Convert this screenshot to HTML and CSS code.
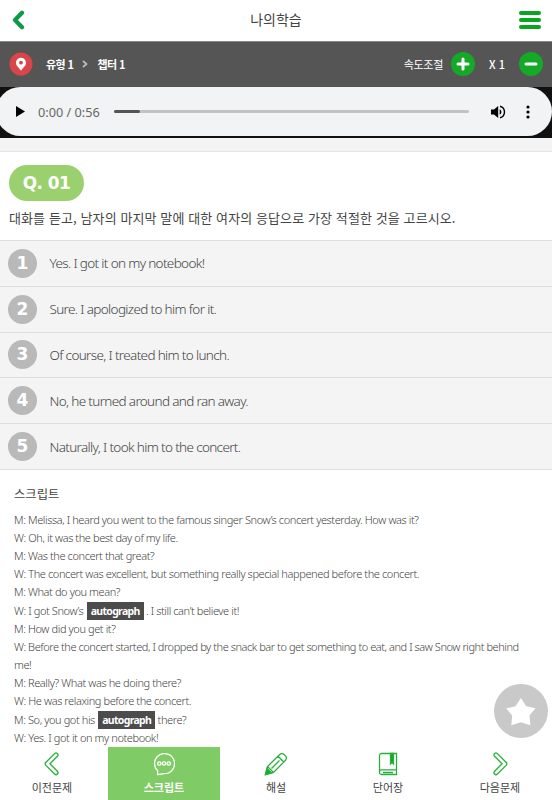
FILE: index.html
```html
<!DOCTYPE html>
<html lang="ko">
<head>
    <meta charset="UTF-8">
    <meta name="viewport" content="width=device-width, initial-scale=1.0">
    <title>나의학습</title>
    <link rel="stylesheet" href="styles.css">
</head>
<body>

    <header class="top">
        <a href="#" class="back" aria-label="이전">
            <svg width="14" height="20" viewBox="0 0 14 20"><path d="M11 2.800L4 10l7 7.200" fill="none" stroke="#0a9a48" stroke-width="4.200" stroke-linecap="round" stroke-linejoin="round"/></svg>
        </a>
        <h1>나의학습</h1>
        <a href="#" class="menu" aria-label="메뉴"><span></span><span></span><span></span></a>
    </header>

    <div class="location">
        <svg class="pin" width="24" height="24" viewBox="0 0 24 24"><circle cx="12" cy="12" r="11.500" fill="#d94548"/><path d="M12 18.800C10.300 15.800 7 14 7 10.800a5 5 0 0 1 10 0c0 3.200-3.300 5-5 8z" fill="#fff"/><circle cx="12" cy="10.700" r="1.900" fill="#d94548"/></svg>
        <span class="step">유형 1</span>
        <svg class="arrow" width="6" height="8" viewBox="0 0 6 8"><path d="M1 1l3.500 3L1 7" fill="none" stroke="#bbb" stroke-width="1.700"/></svg>
        <span class="step">챕터 1</span>
        <span class="speed-label">속도조절</span>
        <button class="round" aria-label="빠르게"><svg width="24" height="24" viewBox="0 0 24 24"><path d="M12 7v10M7 12h10" stroke="#fff" stroke-width="3" stroke-linecap="round"/></svg></button>
        <span class="speed">X 1</span>
        <button class="round" aria-label="느리게"><svg width="24" height="24" viewBox="0 0 24 24"><path d="M7 12h10" stroke="#fff" stroke-width="3" stroke-linecap="round"/></svg></button>
    </div>

    <div class="audio">
        <div class="player">
            <svg class="play" width="9" height="11" viewBox="0 0 9 11"><path d="M0 0l9 5.500L0 11z"/></svg>
            <span class="time">0:00 / 0:56</span>
            <div class="track"><div class="buffered"></div></div>
            <svg class="volume" width="15" height="14" viewBox="0 0 15 14"><path d="M0 4.600h3L7.200 1v12L3 9.400H0z"/><path d="M8.700 4.200a3.100 3.100 0 0 1 0 5.600z"/><path d="M9 1.200a6 6 0 0 1 0 11.600" fill="none" stroke="#000" stroke-width="1.400"/></svg>
            <svg class="more" width="4" height="14" viewBox="0 0 4 14"><circle cx="2" cy="2" r="1.600"/><circle cx="2" cy="7" r="1.600"/><circle cx="2" cy="12" r="1.600"/></svg>
        </div>
    </div>

    <section class="question">
        <span class="number">Q. 01</span>
        <p>대화를 듣고, 남자의 마지막 말에 대한 여자의 응답으로 가장 적절한 것을 고르시오.</p>
    </section>

    <ol class="answers">
        <li><span class="num">1</span>Yes. I got it on my notebook!</li>
        <li><span class="num">2</span>Sure. I apologized to him for it.</li>
        <li><span class="num">3</span>Of course, I treated him to lunch.</li>
        <li><span class="num">4</span>No, he turned around and ran away.</li>
        <li><span class="num">5</span>Naturally, I took him to the concert.</li>
    </ol>

    <section class="script">
        <h2>스크립트</h2>
        <p>M: Melissa, I heard you went to the famous singer Snow’s concert yesterday. How was it?</p>
        <p>W: Oh, it was the best day of my life.</p>
        <p>M: Was the concert that great?</p>
        <p>W: The concert was excellent, but something really special happened before the concert.</p>
        <p>M: What do you mean?</p>
        <p class="has-word">W: I got Snow’s <b>autograph</b> . I still can’t believe it!</p>
        <p>M: How did you get it?</p>
        <p class="long">W: Before the concert started, I dropped by the snack bar to get something to eat, and I saw Snow right behind<br>me!</p>
        <p>M: Really? What was he doing there?</p>
        <p>W: He was relaxing before the concert.</p>
        <p class="has-word">M: So, you got his <b>autograph</b> there?</p>
        <p>W: Yes. I got it on my notebook!</p>
    </section>

    <button class="favorite" aria-label="즐겨찾기">
        <svg width="54" height="54" viewBox="0 0 54 54"><path d="M26.900 14l5.300 8.200 9.300 2.100-6 7.300.9 9.700-9.500-3-9.600 3 .9-9.700-6-7.300 9.300-2.100z" fill="#fff"/></svg>
    </button>

    <nav class="bottom">
        <a href="#">
            <svg width="22" height="24" viewBox="0 0 22 24"><path d="M13.600 1.600L4.700 10.500a2 2 0 0 0 0 2.600l8.900 8.900a1.900 1.900 0 0 0 2.800-2.700l-7.500-7.500 7.500-7.500a1.900 1.900 0 0 0-2.800-2.700z"/></svg>
            <span>이전문제</span>
        </a>
        <a href="#" class="active">
            <svg width="22" height="24" viewBox="0 0 22 24"><path d="M4.600 22.500v-3.700A10 10 0 1 1 11 21.600c-2 .1-4.300.9-6.400.9z"/><circle cx="6.300" cy="11.500" r="1.700"/><circle cx="11" cy="11.500" r="1.700"/><circle cx="15.700" cy="11.500" r="1.700"/></svg>
            <span>스크립트</span>
        </a>
        <a href="#">
            <svg width="24" height="24" viewBox="0 0 24 24"><path d="M1.500 22.500l2-8L15.500 2.700a3.200 3.200 0 0 1 4.800 0l1 1a3.200 3.200 0 0 1 0 4.800L9.500 20.500zM3.500 14.500l6 6M14 4.200l5.800 5.800M15.500 8.500l-8 8"/><path class="solid" d="M1.500 22.500l1.500-6 4.500 4.500z"/></svg>
            <span>해설</span>
        </a>
        <a href="#">
            <svg width="22" height="24" viewBox="0 0 22 24"><path d="M4.500 1.500h15v21h-15a2 2 0 0 1-2-2v-17a2 2 0 0 1 2-2zM2.500 19.500a2 2 0 0 1 2-1.700h15M6 20.500h10"/><path class="solid" d="M13.500 1.500h3v10.500l-1.500-1.500-1.500 1.500z"/></svg>
            <span>단어장</span>
        </a>
        <a href="#">
            <svg width="22" height="24" viewBox="0 0 22 24"><path d="M8.400 1.600l8.900 8.900a2 2 0 0 1 0 2.600L8.400 22a1.900 1.900 0 0 1-2.800-2.700l7.500-7.500-7.500-7.500a1.900 1.900 0 0 1 2.800-2.700z"/></svg>
            <span>다음문제</span>
        </a>
    </nav>

</body>
</html>
```
FILE: styles.css
```css
* {
    box-sizing: border-box;
}

body {
    margin: 0;
    height: 800px;
    overflow: hidden;
    background-color: #fff;
    color: #444;
    font-family: "Noto Sans", "Noto Sans CJK KR", sans-serif;
}

a {
    color: inherit;
    text-decoration: none;
}

button {
    padding: 0;
    border: none;
}

svg {
    display: block;
    flex: none;
}

.top {
    display: flex;
    align-items: center;
    justify-content: space-between;
    height: 42px;
    padding: 0 11px 1px;
    border-bottom: 1px solid #888;
}

.back {
    width: 22px;
}

.top h1 {
    margin: 0;
    padding-bottom: 2px;
    font-family: "Noto Sans CJK KR", sans-serif;
    font-size: 14px;
    font-weight: 400;
    line-height: 18px;
    color: #444;
}

.menu {
    display: flex;
    flex-direction: column;
    gap: 3px;
    width: 22px;
}

.menu span {
    height: 4px;
    border-radius: 2px;
    background-color: #08a51e;
}

.location {
    display: flex;
    align-items: center;
    height: 45px;
    padding: 0 9px 1px;
    background-color: #555;
    color: #fff;
    font-family: "Noto Sans CJK KR", sans-serif;
    font-size: 11px;
}

.step {
    font-weight: 700;
    letter-spacing: -0.6px;
}

.pin {
    margin-right: 13px;
}

.arrow {
    margin: 0 9px;
}

.speed-label {
    margin-left: auto;
    letter-spacing: -0.3px;
}

.round {
    width: 24px;
    height: 24px;
    border-radius: 50%;
    background-color: #14aa27;
}

.speed-label + .round {
    margin-left: 8px;
}

.speed {
    width: 44px;
    text-align: center;
    font-weight: 500;
}

.audio {
    height: 51px;
    background-color: #111;
}

.player {
    display: flex;
    align-items: center;
    height: 49px;
    margin-left: -4px;
    padding: 0 22px 0 20px;
    border-radius: 25px;
    background-color: #f1f3f4;
}

.time {
    width: 76px;
    margin-left: 13px;
    font-size: 12.7px;
    white-space: nowrap;
    color: #666;
}

.track {
    flex: 1;
    height: 3px;
    border-radius: 2px;
    background-color: #c2c3c4;
}

.buffered {
    width: 26px;
    height: 3px;
    border-radius: 2px;
    background-color: #555;
}

.volume {
    margin-left: 22px;
}

.more {
    margin-left: 20px;
}

.question {
    height: 102px;
    padding: 14px 9px 0;
    border-top: 13px solid #f4f4f4;
    box-shadow: inset 0 1px #e5e5e5;
}

.number {
    display: flex;
    align-items: center;
    justify-content: center;
    width: 75px;
    height: 36px;
    border-radius: 18px;
    background-color: #9bd06f;
    color: #fff;
    font-family: "DejaVu Sans", sans-serif;
    font-size: 17px;
    font-weight: 700;
    letter-spacing: -0.6px;
}

.question p {
    margin: 7px 0 0;
    font-family: "Noto Sans CJK KR", sans-serif;
    font-size: 13px;
    line-height: 20px;
    letter-spacing: 0.1px;
    white-space: nowrap;
    color: #444;
}

.answers {
    margin: 0;
    padding: 0;
    list-style: none;
    background-color: #f4f4f4;
    border-bottom: 1px solid #ddd;
}

.answers li {
    display: flex;
    align-items: center;
    gap: 12.5px;
    height: 45.8px;
    padding-left: 8px;
    border-top: 1px solid #ddd;
    font-size: 13.5px;
    font-weight: 300;
    letter-spacing: -0.65px;
}

.num {
    width: 29px;
    height: 29px;
    border-radius: 50%;
    background-color: #b9b9b9;
    color: #fff;
    font-family: "DejaVu Sans", sans-serif;
    font-size: 17px;
    font-weight: 700;
    line-height: 29px;
    letter-spacing: 0;
    text-align: center;
}

.script {
    padding: 15.5px 14px 0;
}

.script h2 {
    margin: 0 0 7px;
    font-family: "Noto Sans CJK KR", sans-serif;
    font-size: 12.3px;
    font-weight: 400;
    line-height: 19px;
    color: #444;
}

.script p {
    margin: 0;
    font-size: 11px;
    font-weight: 300;
    line-height: 18px;
    letter-spacing: -0.4px;
    white-space: nowrap;
}

.script .long {
    letter-spacing: -0.44px;
}

.script .has-word {
    line-height: 19px;
}

.script b {
    display: inline-block;
    height: 18px;
    margin-left: 1px;
    padding: 0 4px;
    background-color: #4c4c4c;
    color: #fff;
    font-size: 10.5px;
    font-weight: 700;
    line-height: 18px;
    letter-spacing: -0.7px;
}

.favorite {
    position: absolute;
    top: 684px;
    left: 494px;
    width: 54px;
    height: 54px;
    border-radius: 50%;
    background-color: #c9c9c9;
}

.bottom {
    position: absolute;
    left: -4px;
    top: 747px;
    display: flex;
    width: 560px;
    height: 53px;
    background-color: #fff;
}

.bottom a {
    flex: 1;
    display: flex;
    flex-direction: column;
    align-items: center;
    padding-top: 5px;
    font-family: "Noto Sans CJK KR", sans-serif;
    font-size: 11px;
    line-height: 18px;
    color: #444;
}

.bottom span {
    margin-top: 2px;
}

.bottom svg {
    fill: none;
    stroke: #28b03c;
    stroke-width: 1.3;
}

.bottom .solid {
    fill: #14aa27;
}

.bottom .active {
    background-color: #7fcb66;
    color: #fff;
    font-weight: 700;
}

.bottom .active svg {
    stroke: #fff;
}
```
